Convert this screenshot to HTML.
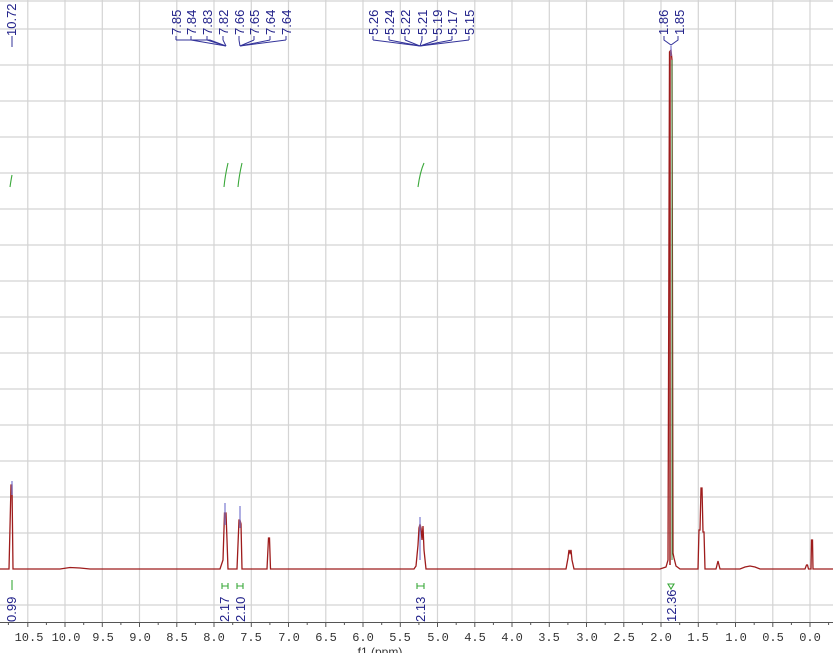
<!DOCTYPE html>
<html><head><meta charset="utf-8"><style>
html,body{margin:0;padding:0;background:#fff;}
svg{display:block;}
text{font-family:"Liberation Sans",sans-serif;}
text.ax{font-family:"Liberation Mono",monospace;}
</style></head><body>
<svg width="833" height="653" viewBox="0 0 833 653" xmlns="http://www.w3.org/2000/svg">
<rect width="833" height="653" fill="#fff"/>
<g stroke="#d4d4d4" stroke-width="1.2">
<line x1="0" y1="1" x2="833" y2="1"/>
<line x1="0" y1="29" x2="833" y2="29"/><line x1="0" y1="65" x2="833" y2="65"/><line x1="0" y1="101" x2="833" y2="101"/><line x1="0" y1="137" x2="833" y2="137"/><line x1="0" y1="173" x2="833" y2="173"/><line x1="0" y1="209" x2="833" y2="209"/><line x1="0" y1="245" x2="833" y2="245"/><line x1="0" y1="281" x2="833" y2="281"/><line x1="0" y1="317" x2="833" y2="317"/><line x1="0" y1="353" x2="833" y2="353"/><line x1="0" y1="389" x2="833" y2="389"/><line x1="0" y1="425" x2="833" y2="425"/><line x1="0" y1="461" x2="833" y2="461"/><line x1="0" y1="497" x2="833" y2="497"/><line x1="0" y1="533" x2="833" y2="533"/><line x1="0" y1="605" x2="833" y2="605"/>
<line x1="27.8" y1="0" x2="27.8" y2="622"/><line x1="65" y1="0" x2="65" y2="622"/><line x1="102.3" y1="0" x2="102.3" y2="622"/><line x1="139.5" y1="0" x2="139.5" y2="622"/><line x1="176.8" y1="0" x2="176.8" y2="622"/><line x1="214" y1="0" x2="214" y2="622"/><line x1="251.3" y1="0" x2="251.3" y2="622"/><line x1="288.5" y1="0" x2="288.5" y2="622"/><line x1="325.8" y1="0" x2="325.8" y2="622"/><line x1="363" y1="0" x2="363" y2="622"/><line x1="400.3" y1="0" x2="400.3" y2="622"/><line x1="437.5" y1="0" x2="437.5" y2="622"/><line x1="474.8" y1="0" x2="474.8" y2="622"/><line x1="512" y1="0" x2="512" y2="622"/><line x1="549.3" y1="0" x2="549.3" y2="622"/><line x1="586.5" y1="0" x2="586.5" y2="622"/><line x1="623.8" y1="0" x2="623.8" y2="622"/><line x1="661" y1="0" x2="661" y2="622"/><line x1="698.3" y1="0" x2="698.3" y2="622"/><line x1="735.5" y1="0" x2="735.5" y2="622"/><line x1="772.8" y1="0" x2="772.8" y2="622"/><line x1="810" y1="0" x2="810" y2="622"/>
</g>
<g fill="none" stroke="#9e1c1c" stroke-width="1.3">
<polyline points="0,569 9,569 11,485 12,485 13,569 60,569 70,567.5 80,568 90,569 220,569 223,560 224.5,513 226,513 227,540 228,569 237,569 239,520 240,520 241,524 242,569 267,569 268.5,538 269.5,538 270.5,569 414,569 416,566 418,545 419,528 420,524 421,528 422,540 423,526 424,550 426,569 566,569 568,558 569,550 570,553 571,550 572,560 574,569 660,569 666,567 668,560 669.5,52 671,50 672,60 673,553 674,558 676,566 680,569 698,569 699,530 700,530 701,488 702,488 703,532 704,532 705,569 716,569 718,561 720,569 740,569 745,567 750,566 755,567 760,569 805,569 806.5,565 807.5,565 808.5,569 811,569 811.5,540 812.5,540 813,569 833,569"/>
</g>
<line x1="670" y1="52" x2="670" y2="565" stroke="#9e1c1c" stroke-width="1.5"/>
<line x1="672" y1="60" x2="672" y2="560" stroke="#3a8a3a" stroke-width="1"/>
<g stroke="#7a7ad0" stroke-width="1.2">
<line x1="12" y1="481" x2="12" y2="495"/>
<line x1="225" y1="503" x2="225" y2="525"/><line x1="240" y1="506" x2="240" y2="528"/>
<line x1="420" y1="517" x2="420" y2="560"/><line x1="671" y1="46" x2="671" y2="56"/>
</g>
<g stroke="#3aa83a" stroke-width="1.1" fill="none">
<path d="M10,187 Q11,180 12,175"/>
<path d="M224,187 Q225,176 228,163"/><path d="M238,187 Q239,176 242,163"/>
<path d="M418,187 Q420,172 424,163"/>
<line x1="12" y1="580" x2="12" y2="590"/>
<path d="M222,583 L222,589 M222,586 L228,586 M228,583 L228,589"/>
<path d="M237,583 L237,589 M237,586 L243,586 M243,583 L243,589"/>
<path d="M417,583 L417,589 M417,586 L424,586 M424,583 L424,589"/>
<path d="M668,584 L674,584 L671,589 Z"/>
</g>
<g stroke="#33339a" stroke-width="1" fill="none">
<path d="M176,40 L176,36 M176,40 L210,40 L226,46"/>
<path d="M191,40 L191,36 M191,40 L226,46"/>
<path d="M207,40 L207,36 M207,40 L226,46"/>
<path d="M223,40 L223,36 M223,40 L226,46"/>
<path d="M239,40 L239,36 M239,40 L240,46"/>
<path d="M254,40 L254,36 M254,40 L240,46"/>
<path d="M270,40 L270,36 M270,40 L240,46"/>
<path d="M286,40 L286,36 M286,40 L240,46"/>
<path d="M373,40 L373,36 M373,40 L420,46"/>
<path d="M389,40 L389,36 M389,40 L420,46"/>
<path d="M405,40 L405,36 M405,40 L420,46"/>
<path d="M422,40 L422,36 M422,40 L420,46"/>
<path d="M437,40 L437,36 M437,40 L420,46"/>
<path d="M452,40 L452,36 M452,40 L420,46"/>
<path d="M469,40 L469,36 M469,40 L420,46"/>
<path d="M664,36 L664,40 L671,45 L678,40 L678,36"/>
<line x1="12" y1="36" x2="12" y2="47"/>
</g>
<g fill="#22228a" font-size="13">
<text transform="translate(16,36) rotate(-90)">10.72</text>
<text transform="translate(181,35) rotate(-90)">7.85</text>
<text transform="translate(196,35) rotate(-90)">7.84</text>
<text transform="translate(212,35) rotate(-90)">7.83</text>
<text transform="translate(228,35) rotate(-90)">7.82</text>
<text transform="translate(244,35) rotate(-90)">7.66</text>
<text transform="translate(259,35) rotate(-90)">7.65</text>
<text transform="translate(275,35) rotate(-90)">7.64</text>
<text transform="translate(291,35) rotate(-90)">7.64</text>
<text transform="translate(378,35) rotate(-90)">5.26</text>
<text transform="translate(394,35) rotate(-90)">5.24</text>
<text transform="translate(410,35) rotate(-90)">5.22</text>
<text transform="translate(427,35) rotate(-90)">5.21</text>
<text transform="translate(442,35) rotate(-90)">5.19</text>
<text transform="translate(457,35) rotate(-90)">5.17</text>
<text transform="translate(474,35) rotate(-90)">5.15</text>
<text transform="translate(668,35) rotate(-90)">1.86</text>
<text transform="translate(684,35) rotate(-90)">1.85</text>
<text transform="translate(16,622) rotate(-90)">0.99</text>
<text transform="translate(229,622) rotate(-90)">2.17</text>
<text transform="translate(245,622) rotate(-90)">2.10</text>
<text transform="translate(425,622) rotate(-90)">2.13</text>
<text transform="translate(676,622) rotate(-90)">12.36</text>
</g>
<line x1="0" y1="622.5" x2="833" y2="622.5" stroke="#555" stroke-width="1"/>
<g stroke="#555" stroke-width="1">
<path d="M27.8,622 v5 M65,622 v5 M102.3,622 v5 M139.5,622 v5 M176.8,622 v5 M214,622 v5 M251.3,622 v5 M288.5,622 v5 M325.8,622 v5 M363,622 v5 M400.3,622 v5 M437.5,622 v5 M474.8,622 v5 M512,622 v5 M549.3,622 v5 M586.5,622 v5 M623.8,622 v5 M661,622 v5 M698.3,622 v5 M735.5,622 v5 M772.8,622 v5 M810,622 v5"/>
<path d="M8.4,622 v3 M46.4,622 v3 M83.7,622 v3 M120.9,622 v3 M158.2,622 v3 M195.4,622 v3 M232.7,622 v3 M269.9,622 v3 M307.2,622 v3 M344.4,622 v3 M381.7,622 v3 M418.9,622 v3 M456.2,622 v3 M493.4,622 v3 M530.7,622 v3 M567.9,622 v3 M605.2,622 v3 M642.4,622 v3 M679.7,622 v3 M716.9,622 v3 M754.2,622 v3 M791.4,622 v3 M828.6,622 v3"/>
</g>
<g fill="#333" font-size="12" text-anchor="middle">
<text class="ax" x="-4" y="641">0</text>
<text class="ax" x="29" y="641">10.5</text><text class="ax" x="66" y="641">10.0</text><text class="ax" x="103" y="641">9.5</text><text class="ax" x="140" y="641">9.0</text><text class="ax" x="177" y="641">8.5</text><text class="ax" x="214" y="641">8.0</text><text class="ax" x="251" y="641">7.5</text><text class="ax" x="289" y="641">7.0</text><text class="ax" x="326" y="641">6.5</text><text class="ax" x="363" y="641">6.0</text><text class="ax" x="400" y="641">5.5</text><text class="ax" x="438" y="641">5.0</text><text class="ax" x="475" y="641">4.5</text><text class="ax" x="512" y="641">4.0</text><text class="ax" x="549" y="641">3.5</text><text class="ax" x="587" y="641">3.0</text><text class="ax" x="624" y="641">2.5</text><text class="ax" x="661" y="641">2.0</text><text class="ax" x="698" y="641">1.5</text><text class="ax" x="736" y="641">1.0</text><text class="ax" x="773" y="641">0.5</text><text class="ax" x="810" y="641">0.0</text>
</g>
<text x="380" y="656" font-size="12" fill="#333" text-anchor="middle">f1 (ppm)</text>
</svg>
</body></html>
